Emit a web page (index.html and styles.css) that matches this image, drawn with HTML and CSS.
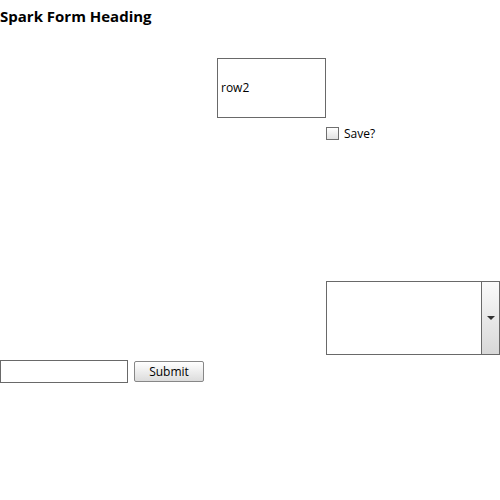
FILE: index.html
```html
<!DOCTYPE html>
<html lang="en">
<head>
    <meta charset="UTF-8">
    <title>Spark Form</title>
    <link rel="stylesheet" href="styles.css">
</head>
<body>

<h1 class="heading">Spark Form Heading</h1>

<div class="row2-box">row2</div>

<label class="save">
    <span class="check"></span>
    <span>Save?</span>
</label>

<div class="combo">
    <div class="combo-list"></div>
    <div class="combo-btn"><span class="arrow"></span></div>
</div>

<div class="submit-row">
    <div class="text-input"></div>
    <div class="btn">Submit</div>
</div>

</body>
</html>
```

FILE: styles.css
```css
* {
    margin: 0;
    padding: 0;
    box-sizing: border-box;
}

body {
    margin: 0;
    font-family: "Open Sans", "DejaVu Sans", sans-serif;
    font-size: 12px;
    color: #000;
    background: #fff;
}

.heading {
    font-size: 15px;
    font-weight: bold;
    line-height: 20px;
    padding-top: 6px;
    height: 58px;
}

.row2-box {
    margin-left: 217px;
    width: 109px;
    height: 60px;
    border: 1px solid #696969;
    padding-left: 3px;
    line-height: 58px;
}

.save {
    display: flex;
    align-items: center;
    gap: 5px;
    margin-left: 326px;
    margin-top: 8px;
    height: 14px;
}

.check {
    width: 13px;
    height: 13px;
    border: 1px solid #6f6f6f;
    background: linear-gradient(#fff, #e2e2e2);
}

.combo {
    display: flex;
    margin-left: 326px;
    margin-top: 141px;
    width: 174px;
    height: 74px;
    border: 1px solid #696969;
}

.combo-list {
    flex: 1;
    background: #fff;
}

.combo-btn {
    width: 18px;
    border-left: 1px solid #696969;
    background: linear-gradient(#fafafa, #d8d8d8);
    display: flex;
    align-items: center;
    justify-content: center;
}

.arrow {
    width: 0;
    height: 0;
    border-left: 4px solid transparent;
    border-right: 4px solid transparent;
    border-top: 4px solid #333;
}

.submit-row {
    display: flex;
    align-items: flex-start;
    gap: 6px;
    margin-top: 5px;
}

.text-input {
    width: 128px;
    height: 23px;
    border: 1px solid #696969;
    background: #fff;
}

.btn {
    margin-top: 1px;
    width: 70px;
    height: 21px;
    border: 1px solid #878787;
    border-radius: 2px;
    background: linear-gradient(#fff, #dcdcdc);
    text-align: center;
    line-height: 19px;
}
```
